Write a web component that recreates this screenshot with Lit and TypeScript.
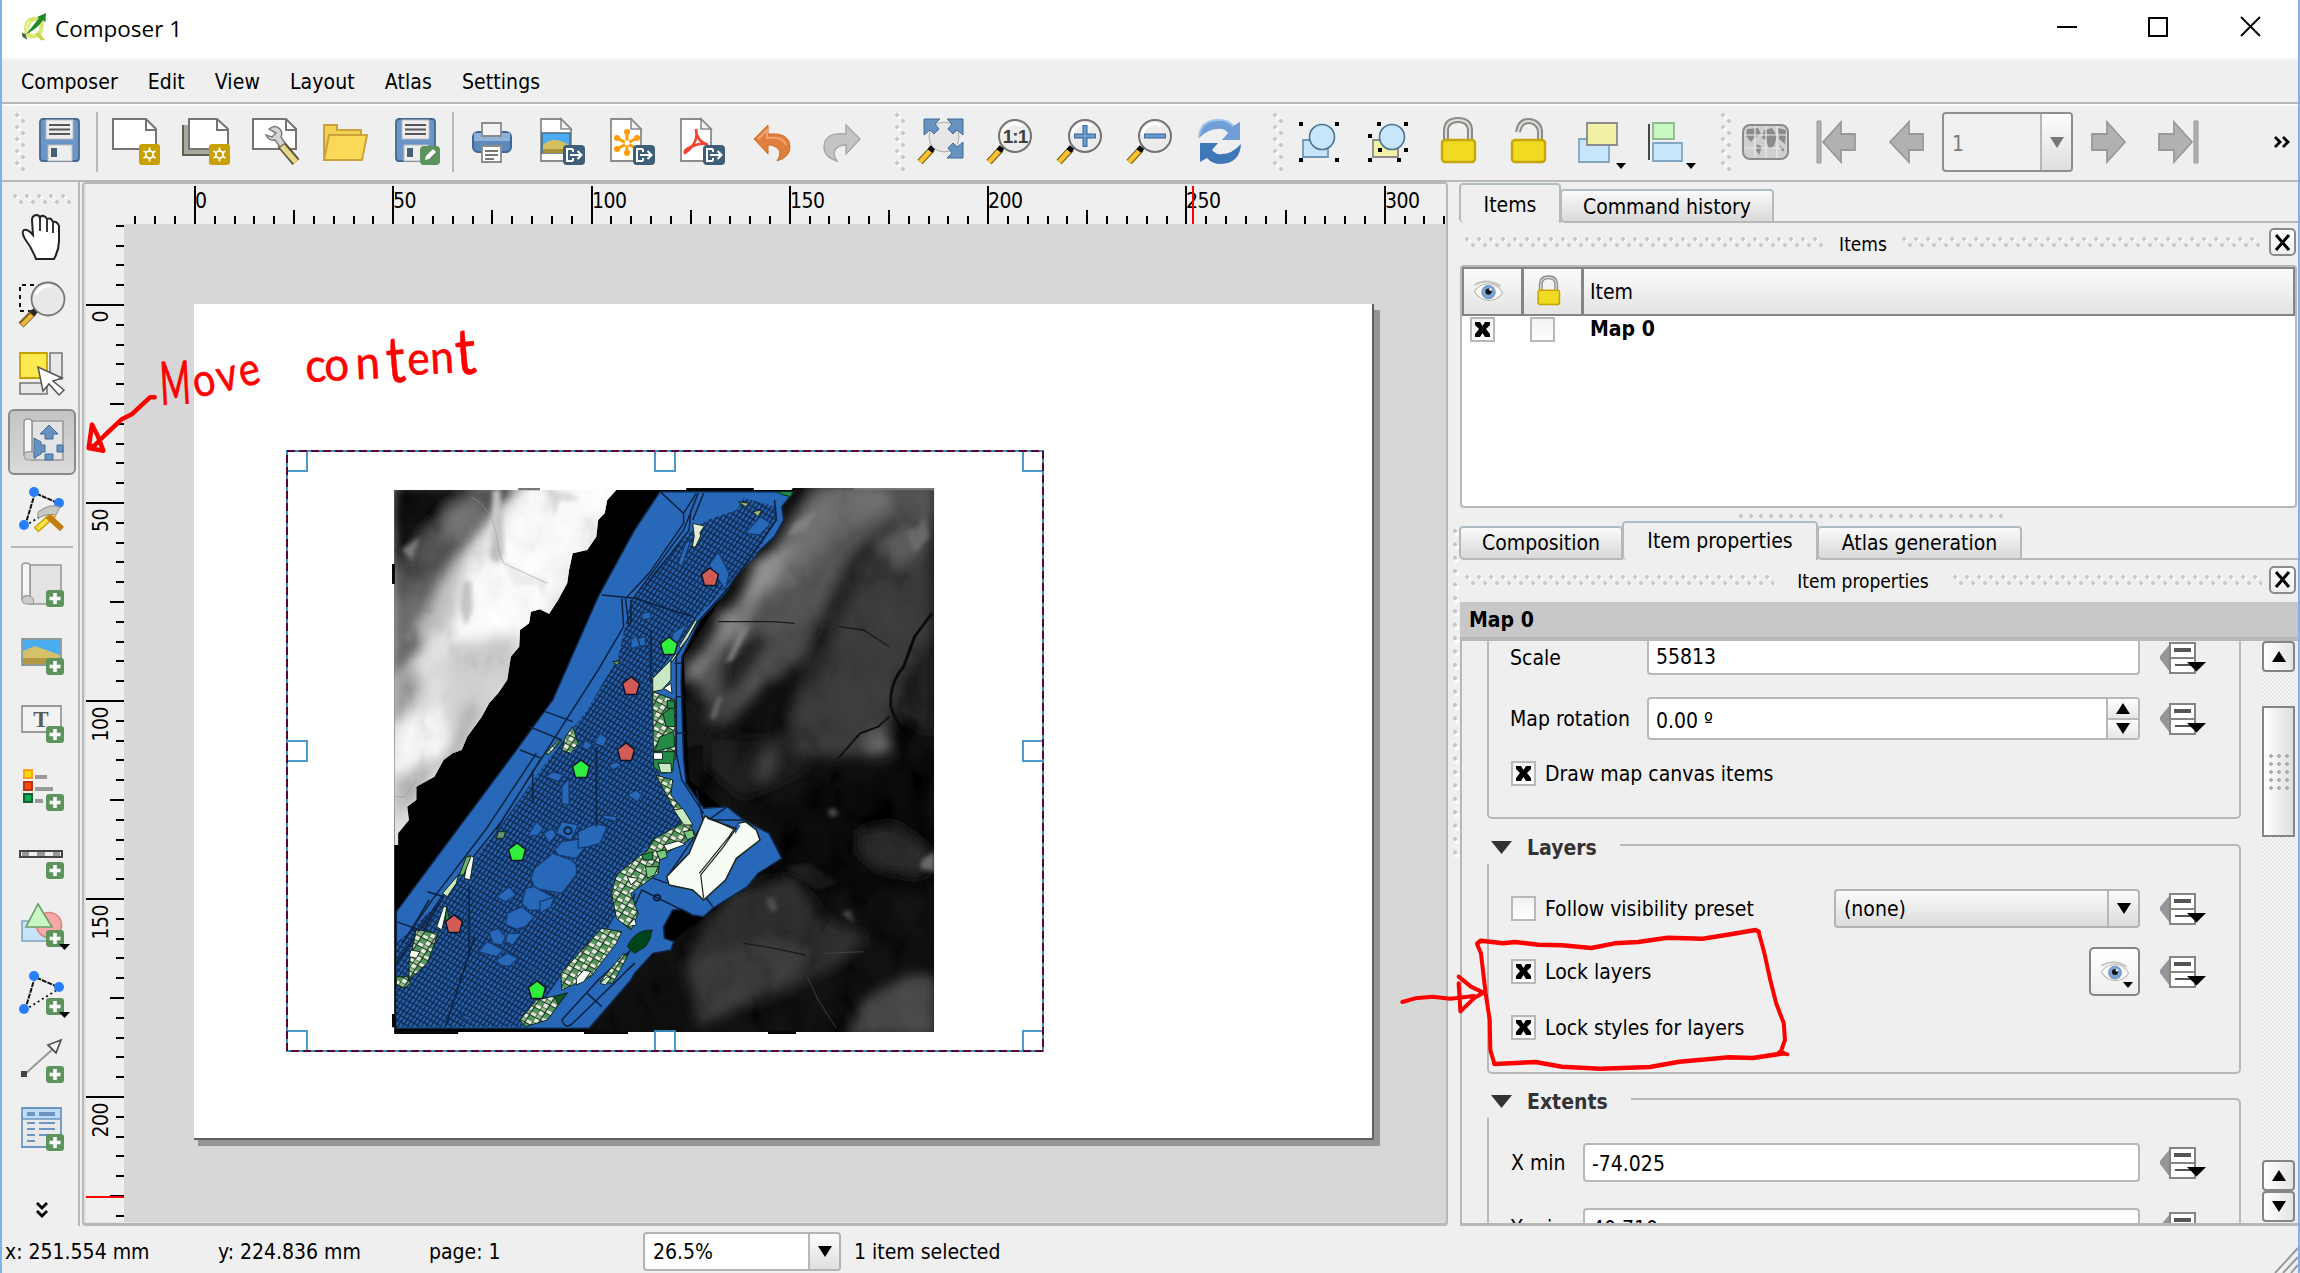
import { LitElement, html, svg, css, nothing } from "lit";
import { customElement, property } from "lit/decorators.js";

/* ---------- shared icon parts ---------- */
const plus = svg`<rect x="28" y="28" width="18" height="17" rx="3" fill="#5d935c"/><path d="M37 31v11M31.500 36.500h11" stroke="#fff" stroke-width="3.600"/>`;
const star = svg`<rect x="27" y="26" width="21" height="21" rx="3" fill="#c8a000"/><path d="M37.500 29.500v14M31.500 33l12 7M43.500 33l-12 7" stroke="#fff" stroke-width="1.800"/><circle cx="37.500" cy="36.500" r="3.600" fill="#c8a000" stroke="#fff" stroke-width="1.800"/>`;
const exportBadge = svg`<rect x="25" y="27" width="22" height="20" rx="4" fill="#3d5f78"/><path d="M35 31h-6v12h6M32 37h11M39.500 33l4 4-4 4M35 31v3M35 43v-3" stroke="#fff" stroke-width="2" fill="none"/>`;
const slimDoc = svg`<path d="M3 1h20l10 10v32H3z" fill="#fff" stroke="#8b8b8b" stroke-width="1.800"/><path d="M23 1v10h10z" fill="#f2f2f2" stroke="#8b8b8b" stroke-width="1.600"/>`;
const floppy = svg`<rect x="4" y="1" width="39" height="42" rx="3" fill="#6b95c5" stroke="#44688f" stroke-width="1.800"/><rect x="10" y="2" width="27" height="19" fill="#eee" stroke="#bbb"/><path d="M13 7h21M13 11.500h21M13 16h21" stroke="#555" stroke-width="2"/><rect x="12" y="27" width="24" height="16" fill="#eee" stroke="#bbb"/><rect x="15" y="30" width="6" height="9" fill="#44607d"/>`;
const lens = svg`<path d="M15 31L3 44" stroke="#7a6420" stroke-width="7"/><path d="M13 33L3 44" stroke="#fcc22c" stroke-width="4.500"/><path d="M16 29l-3 4" stroke="#000" stroke-width="6"/><circle cx="29" cy="18" r="16" fill="#ececec" stroke="#747474" stroke-width="2"/><path d="M16 17a13 13 0 0 1 20-9" fill="none" stroke="#fff" stroke-width="3"/>`;
const nodes = svg`<path d="M7 40L17 7L42 18" fill="none" stroke="#111" stroke-width="2" stroke-dasharray="5 1"/><path d="M7 40L42 18" stroke="#111" stroke-width="1.800" stroke-dasharray="2 3"/><g fill="#277ffb"><circle cx="16" cy="6" r="5"/><circle cx="41" cy="17" r="5"/><circle cx="6" cy="39" r="5"/></g>`;
const caret = svg`<path d="M41 42h11l-5.500 6z" fill="#000"/>`;
const tbCaret = svg`<path d="M42 45h10l-5 6z" fill="#000"/>`;
const mapSheet = svg`<path d="M10 3h31v39H10z" fill="#e3e3e3" stroke="#999" stroke-width="1.600"/><path d="M2 4q0-3 4-3t4 3v30q-8-1-8 4z" fill="#f6f6f6" stroke="#999" stroke-width="1.600"/><path d="M2 38q0 4 4 4h7q2-6-3-8-8-1-8 4z" fill="#ccc" stroke="#999"/>`;
const padlock = svg`<path d="M12 22v-9q0-11 12-11t12 11v9" fill="none" stroke="#8b8b87" stroke-width="6"/><path d="M12 22v-9q0-11 12-11t12 11v9" fill="none" stroke="#deded8" stroke-width="2"/>`;
const lockBody = svg`<rect x="8" y="22" width="33" height="22" rx="3" fill="#f0da22" stroke="#c6a504" stroke-width="2.400"/>`;

const ICONS: Record<string, unknown> = {
  save: floppy,
  newdoc: svg`<path d="M1 1h33l10 10v20H1z" fill="#fff" stroke="#747474" stroke-width="2"/><path d="M34 1v11h10" fill="none" stroke="#747474" stroke-width="2"/>${star}`,
  dup: svg`<path d="M1 7h12v30H1z" fill="#a8a89c"/><path d="M1 7v30h33v-6" fill="#a8a89c" stroke="#5f5f58" stroke-width="2"/><path d="M7 1h28l11 10v20H7z" fill="#fff" stroke="#747474" stroke-width="2"/><path d="M35 1v11h11" fill="none" stroke="#747474" stroke-width="2"/>${star}`,
  wrench: svg`<path d="M1 1h33l10 10v20H1z" fill="#fff" stroke="#747474" stroke-width="2"/><path d="M34 1v11h10" fill="none" stroke="#747474" stroke-width="2"/><path d="M29 26L44 44" stroke="#5b5440" stroke-width="9"/><path d="M30 28L44 44" stroke="#e8d888" stroke-width="5.500"/><path d="M17 11q6-5 11 0q3 4 1 8l4 6-5 4-5-7q-6 1-9-5l6 2 4-4z" fill="#d5d5d5" stroke="#7b7b7b" stroke-width="1.500"/>`,
  folder: svg`<path d="M2 42V7h13v5h24v7" fill="#f2cf4e" stroke="#c9a23a" stroke-width="2"/><path d="M7 17h38l-5 25H2z" fill="#fbd958" stroke="#c9a23a" stroke-width="2"/>`,
  saveas: svg`${floppy}<rect x="28" y="28" width="20" height="19" rx="4" fill="#5d935c"/><path d="M33 42l1-4 7-7 3 3-7 7z" fill="#fff"/>`,
  print: svg`<rect x="5" y="14" width="38" height="20" rx="5" fill="#5f88bd" stroke="#3e6797" stroke-width="2"/><path d="M6 15h36v8H6z" fill="#8fb2da"/><path d="M14 5h19v13H14z" fill="#f2f2f2" stroke="#8b8b8b" stroke-width="1.800"/><path d="M14 28h19v16H14z" fill="#fff" stroke="#8b8b8b" stroke-width="1.800"/><path d="M17 33h13M17 37h13M17 41h9" stroke="#777" stroke-width="1.800"/>`,
  expimg: svg`${slimDoc}<path d="M4 15h28v20H4z" fill="#4bacf0" stroke="#4a6b80" stroke-width="1.500"/><path d="M5 27q10-10 26 0v7H5z" fill="#d1bf60"/><path d="M5 31h26v4H5z" fill="#a8913a"/>${exportBadge}`,
  expsvg: svg`${slimDoc}<path d="M19 14v22M9 20l20 11M29 20L9 31" stroke="#ff9b05" stroke-width="3"/><g fill="#ff9b05"><circle cx="19" cy="14" r="3"/><circle cx="19" cy="35" r="3"/><circle cx="9" cy="20" r="3"/><circle cx="29" cy="20" r="3"/><circle cx="9" cy="31" r="3"/></g><circle cx="19" cy="25" r="2.500" fill="#fff"/>${exportBadge}`,
  exppdf: svg`${slimDoc}<path d="M18 11q3 14-11 24q-2-3 8-7t15-1q-12-4-12-16" fill="none" stroke="#f4442e" stroke-width="2.600"/>${exportBadge}`,
  undo: svg`<path d="M6 21L20 7v9q22-2 22 13q0 10-13 14q7-11-3-15q-2-1-6-1v9z" fill="#e07f3d" stroke="#d56c2c"/><path d="M10 21l9-9v8q16-2 19 7" fill="none" stroke="#f0a878" stroke-width="1.800"/>`,
  redo: svg`<path d="M42 21L28 7v9Q6 14 6 29q0 10 13 14q-7-11 3-15q2-1 6-1v9z" fill="#c4c4c4" stroke="#a8a8a8" stroke-width="1.400"/>`,
  zoomfull: svg`<path d="M16 31L4 44" stroke="#7a6420" stroke-width="7"/><path d="M14 33L4 44" stroke="#fcc22c" stroke-width="4.500"/><path d="M17 29l-3 4" stroke="#000" stroke-width="6"/><circle cx="28" cy="19" r="15" fill="#e6e6e6" stroke="#aaa"/><g fill="#6892c0" stroke="#3f6c9b"><path d="M8 1h16l-5 5 4 5-5 5-4-4-6 5z"/><path d="M47 1H31l5 5-4 5 5 5 4-4 6 5z"/><path d="M47 40H31l5-5-4-5 5-5 4 4 6-5z"/></g>`,
  zoom11: svg`${lens}<text x="29" y="25" text-anchor="middle" font-family="Liberation Sans" font-weight="700" font-size="19" letter-spacing="-1" fill="#3b3f44">1:1</text>`,
  zoomin: svg`${lens}<path d="M29 7v22M18 18h22" stroke="#3c6da0" stroke-width="5"/><path d="M29 8v20M19 18h20" stroke="#6d9cd0" stroke-width="2.600"/>`,
  zoomout: svg`${lens}<path d="M18 18h22" stroke="#3c6da0" stroke-width="5"/><path d="M19 18h20" stroke="#6d9cd0" stroke-width="2.600"/>`,
  refresh: svg`<path d="M3 20Q4 2 23 2q9 0 14 6l7-4v18H26l6-7q-4-5-10-4Q12 11 3 20z" fill="#6f9fd6"/><path d="M3 20Q4 2 23 2q9 0 14 6" fill="none" stroke="#9fc3ea" stroke-width="2"/><path d="M45 26Q44 45 25 46q-9 0-14-6l-7 4V25h18l-6 7q4 5 10 4q10 0 19-10z" fill="#3f78b8"/>`,
  group: svg`<path d="M9 22h25v17H9z" fill="#c7e3f8" stroke="#6f97b5" stroke-width="1.800"/><circle cx="28" cy="19" r="12.500" fill="#c7e6fb" stroke="#4a7594" stroke-width="1.600"/><path d="M5 4h4v4H5zM41 4h4v4h-4zM5 40h4v4H5zM41 40h4v4h-4z" fill="#000"/>`,
  ungroup: svg`<path d="M9 22h25v17H9z" fill="#f2f0a4" stroke="#8b8b8b" stroke-width="1.800"/><circle cx="28" cy="19" r="12.500" fill="#c7e6fb" stroke="#4a7594" stroke-width="1.600"/><path d="M13 4h4v4h-4zM40 4h4v4h-4zM4 16h4v4H4zM14 30h4v4h-4zM40 30h4v4h-4zM4 40h4v4H4zM33 40h4v4h-4z" fill="#000"/>`,
  lock: svg`${padlock}${lockBody}`,
  unlock: svg`<path d="M14 14Q16 2 26 3q11 2 10 14v6" fill="none" stroke="#8b8b87" stroke-width="6"/><path d="M14 14Q16 2 26 3q11 2 10 14v6" fill="none" stroke="#deded8" stroke-width="2"/>${lockBody}`,
  raise: svg`<path d="M5 21h30v23H5z" fill="#c7e6fb" stroke="#7fa6c2" stroke-width="1.800"/><path d="M13 5h30v22H13z" fill="#f2f0a4" stroke="#8b8b8b" stroke-width="1.800"/>${tbCaret}`,
  align: svg`<path d="M5 6v36" stroke="#333" stroke-width="1.800"/><path d="M9 5h21v16H9z" fill="#c9f7c4" stroke="#90bb8c" stroke-width="1.800"/><path d="M9 25h29v18H9z" fill="#c7e6fb" stroke="#7fa6c2" stroke-width="1.800"/>${tbCaret}`,
  atlas: svg`<rect x="1" y="7" width="45" height="34" rx="7" fill="#cfcfcf" stroke="#8b8b8b" stroke-width="2"/><path d="M5 11l11-1 3 6-7 4-3 4-5-6zM15 26l5 3-3 8-3-5zM22 12l8-2 5 8-3 10-5 3-3-9-4-2zM36 10l8 2-1 14-6-5zM37 28l6 2-2 4z" fill="#8b8b8b"/><path d="M13 8v32M24 8v32M35 8v32M2 17h43M2 30h43" stroke="#ececec" stroke-width="1.200"/>`,
  first: svg`<path d="M5 3h4v42H5z" fill="#b1b1b1" stroke="#999"/><path d="M11 24L29 4v12h14v16H29v12z" fill="#b1b1b1" stroke="#999" stroke-width="1.800"/>`,
  prev: svg`<path d="M8 24L27 4v12h14v16H27v12z" fill="#b1b1b1" stroke="#999" stroke-width="1.800"/>`,
  next: svg`<path d="M40 24L22 4v12H7v16h15v12z" fill="#b1b1b1" stroke="#999" stroke-width="1.800"/>`,
  last: svg`<path d="M39 3h4v42h-4z" fill="#b1b1b1" stroke="#999"/><path d="M37 24L19 4v12H4v16h15v12z" fill="#b1b1b1" stroke="#999" stroke-width="1.800"/>`,
  hand: svg`<path d="M18 45Q14 34 7 25Q3 18 6 16q4-1 9 5L14 6q0-4 4-5q4 0 4 4l0-2q4-3 7 2q4-2 6 3q4-1 6 4v15q0 9-5 18z" fill="#fff" stroke="#222" stroke-width="2"/><path d="M22 4v13M29 6v12M35 9v10" stroke="#222" stroke-width="1.800"/>`,
  zoomtool: svg`<path d="M24 3H2v26h13" fill="none" stroke="#111" stroke-width="2" stroke-dasharray="4 4"/><path d="M16 30L3 43" stroke="#7a6420" stroke-width="7"/><path d="M14 33L4 43" stroke="#edb83e" stroke-width="4"/><path d="M18 28l-4 4" stroke="#222" stroke-width="6"/><circle cx="30" cy="17" r="16.500" fill="#e9e9e9" stroke="#777" stroke-width="1.800"/><path d="M18 12q6-10 15-8" stroke="#fff" stroke-width="3" fill="none"/>`,
  select: svg`<path d="M2 3h27v25H2z" fill="#fce94f" stroke="#c4a000" stroke-width="1.800"/><path d="M32 3h12v26H32zM2 33h27v11H2z" fill="#e8e8e8" stroke="#777" stroke-width="1.600"/><path d="M20 17l5 24 6-7 10 11 5-5-11-9 9-3z" fill="#fff" stroke="#555" stroke-width="1.500"/>`,
  move: svg`<g transform="translate(4,0)">${mapSheet}<g fill="#6892c0" stroke="#3f6c9b"><path d="M27 7l9 9h-5v5h-8v-5h-5z"/><path d="M12 20l7 4v3h4v7h-4v2l-7 4z"/><path d="M35 27h6v7h-6zM23 36h8v6h-8z"/></g></g>`,
  editnodes: svg`${nodes}<path d="M18 44L36 28" stroke="#c9a204" stroke-width="7"/><path d="M19 43L36 28" stroke="#fce13f" stroke-width="4"/><path d="M30 30l14 13" stroke="#c17d11" stroke-width="6"/><path d="M20 26q12-9 22-5l-4 8q-8-2-18 3z" fill="#c9c9c4" stroke="#8b8b87"/>`,
  addmap: svg`<g transform="translate(2,0)">${mapSheet}</g>${plus}`,
  addpic: svg`<path d="M4 9h39v26H4z" fill="#4bacf0" stroke="#8f9a9f" stroke-width="1.800"/><path d="M5 21l12-5 25 9v9H5z" fill="#d4c16a"/><path d="M5 28h37v6H5z" fill="#b19a42"/>${plus}`,
  addlabel: svg`<path d="M4 8h39v26H4z" fill="#f3f3f3" stroke="#999" stroke-width="1.800"/><text x="23" y="29" text-anchor="middle" font-family="Liberation Serif" font-weight="700" font-size="23" fill="#5b5b5b">T</text>${plus}`,
  addlegend: svg`<path d="M6 4h8v8H6z" fill="#fddc00" stroke="#ffa11d" stroke-width="2"/><path d="M6 16h8v8H6z" fill="#fb4a04" stroke="#b8321c" stroke-width="2"/><path d="M6 28h8v8H6z" fill="#04b04f" stroke="#145c38" stroke-width="2"/><path d="M17 11h12M17 23h18M17 35h8" stroke="#999" stroke-width="4"/>${plus}`,
  addscale: svg`<rect x="2" y="17" width="42" height="6" fill="#eee" stroke="#444" stroke-width="2"/><path d="M4 20h7M19 20h8M35 20h7" stroke="#999" stroke-width="4"/>${plus}`,
  addshape: svg`<path d="M4 19h28v20H4z" fill="#c7e3f8" stroke="#7fa6c2" stroke-width="1.600"/><circle cx="31" cy="23" r="12.500" fill="#f6a9a6" stroke="#dc8684" stroke-width="1.600"/><path d="M20 2l14 23H8z" fill="#c9f7c4" stroke="#6b9d68" stroke-width="1.600"/>${plus}${caret}`,
  addnodes: svg`${nodes}${plus}${caret}`,
  addarrow: svg`<path d="M7 36L36 10" stroke="#999" stroke-width="2"/><path d="M3 33h6v6H3z" fill="#444"/><path d="M43 2L30 7l8 8z" fill="#f5f5f5" stroke="#555" stroke-width="1.800"/>${plus}`,
  addtable: svg`<path d="M4 2h39v39H4z" fill="#e9e9e9" stroke="#6b95c5" stroke-width="1.800"/><path d="M5 3h37v10H5z" fill="#bcdcf5"/><path d="M4 13h39" stroke="#6b95c5" stroke-width="1.600"/><path d="M9 8h8M21 8h16" stroke="#6b95c5" stroke-width="4"/><path d="M9 17h8M21 17h16M9 23h8M21 23h16M9 29h8M21 29h16M9 35h8" stroke="#6b95c5" stroke-width="2"/>${plus}`,
  logo: svg`<path d="M31 8Q14 4 8 18Q3 36 16 42q18 4 23-16Q41 10 31 8zm-3 6q6 4 4 13-3 10-12 9-7-3-4-13 3-10 12-9z" fill="#dbe76c" fill-rule="evenodd"/><path d="M14 32q-6-8 2-18" fill="none" stroke="#f2f7b5" stroke-width="3"/><path d="M10 36Q20 24 31 10l-2-3L43 1l-1 15-4-3Q28 28 10 36z" fill="#238a2c"/><path d="M25 34l9 12h8L32 33z" fill="#c5d84e"/><path d="M3 34l6 1 3 10-8-5z" fill="#3f6b3c"/>`,
  eye: svg`<path d="M2 24Q10 12 24 12t22 14Q38 38 24 38 10 37 2 24z" fill="#fafaf8" stroke="#b9b9b4" stroke-width="1.800"/><circle cx="24" cy="25" r="10.500" fill="#7ba2cf" stroke="#5a83b4"/><circle cx="24" cy="24" r="4.800" fill="#111"/><circle cx="27" cy="21" r="2" fill="#fff"/><path d="M2 14Q22 2 43 16" fill="none" stroke="#c4c4bf" stroke-width="3"/>`,
};

@customElement("qg-icon")
class QgIcon extends LitElement {
  @property() name = "";
  static styles = css`
    :host { display: block; width: 48px; height: 48px; flex: none; }
    svg { display: block; width: 100%; height: 100%; overflow: visible; }
  `;
  render() {
    return html`<svg viewBox="0 0 48 48">${ICONS[this.name] ?? nothing}</svg>`;
  }
}

/* Data-defined override button */
@customElement("qg-override")
class QgOverride extends LitElement {
  static styles = css`
    :host { display: block; width: 46px; height: 32px; flex: none; }
    svg { display: block; overflow: visible; }
  `;
  render() {
    return html`<svg width="46" height="32" viewBox="0 0 46 32">
      <path d="M10 2v28L0 17v-3z" fill="#96969a" />
      <path d="M10 1h25v15H10zM10 16h25v15H10z" fill="#fff" stroke="#858580" stroke-width="2" />
      <path d="M14 8h17" stroke="#555" stroke-width="4" /><path d="M15 23h16" stroke="#555" stroke-width="2" />
      <path d="M27 20h19l-9.500 9.500z" fill="#000" />
    </svg>`;
  }
}

/* Map canvas: rulers, paper page and the selected map item */
@customElement("qg-canvas")
class QgCanvas extends LitElement {
  static styles = css`
    :host { display: block; width: 1360px; height: 1038px; }
    svg { display: block; }
    .num { font: 21px "DejaVu Sans Condensed", "DejaVu Sans", sans-serif; font-stretch: condensed; fill: #000; letter-spacing: -.5px; }
    .thin, .lines * { vector-effect: non-scaling-stroke; }
  `;

  private ticks() {
    const out: unknown[] = [];
    for (let i = -3; i <= 63; i++) {
      const x = Math.round(193.900 + i * 19.830);
      if (x > 1444) break;
      const y = i % 10 === 0 ? 186 : i % 5 === 0 ? 210 : 216;
      out.push(svg`<rect x=${x} y=${y} width="2" height=${224 - y}/>`);
      if (i % 10 === 0) out.push(svg`<text class="num" x=${x + 1} y="208">${i * 5}</text>`);
    }
    for (let i = -4; i <= 46; i++) {
      const y = Math.round(304 + i * 19.800);
      const x = i % 10 === 0 ? 86 : i % 5 === 0 ? 110 : 116;
      out.push(svg`<rect x=${x} y=${y} width=${124 - x} height="2"/>`);
      if (i % 10 === 0) {
        out.push(svg`<text class="num" text-anchor="end" transform=${`translate(108 ${y + 7}) rotate(-90)`}>${i * 5}</text>`);
      }
    }
    return out;
  }

  private marker(x: number, y: number, c: string) {
    return svg`<path transform=${`translate(${x} ${y})`} d="M0-9L8.500-2.600 5.500 8.500H-5.500L-8.500-2.600z" fill=${c} stroke="#06122a" stroke-width="1.400"/>`;
  }

  private terrain() {
    return svg`
      <rect x="39" y="60" width="1479" height="1626" fill="#000"/>
      <g clip-path="url(#west)">
        <rect x="39" y="60" width="640" height="1100" fill="#e2e2e2"/>
        <g filter="url(#soft)">
          <path d="M400 40H680L520 330 400 520 300 560 190 520 240 300 330 180z" fill="#fff"/>
          <path d="M30 40H400L330 110 250 210 200 330 120 520 30 640z" fill="#4b4b4b"/>
          <path d="M30 40H270L130 180 30 330z" fill="#000"/>
          <path d="M190 110l80-30 10 60-60 70-60 0z" fill="#6e6e6e"/>
          <path d="M30 430l60-90 80-30 20 80-70 110-90 90z" fill="#626262"/>
          <path d="M100 480l100-200 50-60-50 220-80 80z" fill="#c4c4c4"/>
          <path d="M30 640l60-60 30 70-90 130z" fill="#a2a2a2"/>
          <path d="M200 520l180-30-40 180-120 180-60-120z" fill="#d2d2d2"/>
          <path d="M60 760l110-60 20 120-60 80-90 30z" fill="#fcfcfc"/>
          <path d="M160 900l60-120 30-90 20 20-60 160z" fill="#9c9c9c"/>
          <path d="M40 920l120-60-60 130-60 60z" fill="#b8b8b8"/>
        </g>
        <g filter="url(#softer)">
          <path d="M225 340l25-10 5 90-20 50-15-60zM310 60l22 0 10 190-14 30-25-10z" fill="#c6c6c6"/>
          <path d="M460 60l60 10 30 20-60 5-10 40-10-50z" fill="#dedede"/>
          <path d="M330 260l70 50 60 20-10 60-20-50-60 10z" fill="#efefef"/>
          <path d="M60 500l40-30 -10 60zM60 240l50-40-20 70z" fill="#777"/>
        </g>
        <path d="M250 80q70 40 75 160l15 40 120 60M39 980l30 0 30-50" fill="none" stroke="#9b9b9b" stroke-width="1" class="thin" opacity=".6"/>
        <rect x="39" y="60" width="640" height="1100" filter="url(#noise)" opacity=".08"/>
      </g>
      <g clip-path="url(#east)">
        <rect x="540" y="50" width="990" height="1640" fill="#070707"/>
        <g filter="url(#soft)">
          <path d="M1190 40H1530V200L1400 180 1300 260 1230 400 1160 560 1060 640 940 780 870 640 870 560 1040 300z" fill="#505050"/>
          <path d="M1170 110L1260 40 1400 60 1400 110 1240 210 1160 330 1000 410z" fill="#6a6a6a"/>
          <path d="M1030 270l110-50-60 120-90 60z" fill="#909090"/>
          <path d="M930 430l120-70-60 130-80 50z" fill="#848484"/>
          <path d="M850 570l100-60-70 120-50 10z" fill="#787878"/>
          <path d="M1100 470l90-20-90 180-60 0z" fill="#454545"/>
          <path d="M1240 400L1370 200l150-60v600l-100-60-40 180H1090l60-200z" fill="#363636"/>
          <path d="M1150 560L1290 250l130-110 20 10-120 150-80 230-60 140z" fill="#1a1a1a"/>
          <path d="M1360 220l100-60 40 60-70 80z" fill="#565656"/>
          <path d="M940 560l90-70 50 10-110 190-50 60z" fill="#1c1c1c"/>
          <path d="M900 750l50-90 60 0-60 120z" fill="#3c3c3c"/>
          <path d="M840 660l80 30-40 130-50 30z" fill="#070707"/>
          <path d="M1330 800l60-30 20 70-60 20z" fill="#6a6a6a"/>
          <path d="M1420 620l100-120v300l-90-60z" fill="#1a1a1a"/>
          <path d="M900 800h220l60 100-180 90-100-90z" fill="#161616"/>
          <path d="M1040 890l50-90 0 90-50 50z" fill="#3e3e3e"/>
          <path d="M1100 1010l420-160v420l-420 0z" fill="#010101"/>
          <path d="M1320 1080l90-20 90 70 20 40-30 50-110-20-60-50z" fill="#242424"/>
          <path d="M960 1270l170-50 90 120 120 60-80 90-240 120-180-150 90-150z" fill="#262626"/>
          <path d="M840 1480l240-80 120 30-80 110-240 130z" fill="#353535"/>
          <path d="M1330 1590l130-80 70 10v180h-250z" fill="#424242"/>
        </g>
        <g filter="url(#softer)">
          <path d="M1490 1170l35-25v60l-40-10z" fill="#666"/>
          <path d="M1060 1290l20-10 15 40-20 5zM1270 1330l20-10 15 40zM1230 1020l20-5 10 20-20 5z" fill="#4a4a4a"/>
          <path d="M910 740l20-60 10 0-20 70z" fill="#707070"/>
          <path d="M1140 160l60-40-30 60-50 20zM990 480l30-20-50 110-20 10z" fill="#7f7f7f"/>
          <path d="M1110 1190l70-10 80 60-60 20zM960 1200l60 0 60 20-90 40z" fill="#161616"/>
          <path d="M1450 190l50-50 10 60-40 50z" fill="#666"/>
        </g>
        <path d="M1518 430L1470 500 1440 590Q1400 640 1405 710q20 80 115 145" fill="none" stroke="#040404" stroke-width="3" class="thin"/>
        <path d="M1400 740L1370 770 1320 790 1260 865" fill="none" stroke="#0a0a0a" stroke-width="2" class="thin"/>
        <path d="M930 455h150l60 5M1260 470l70 10 70 50M1000 1420l60 10 110 25M840 690l70 85" fill="none" stroke="#141414" stroke-width="1.300" class="thin"/>
        <path d="M1175 1520l30 70 50 85M1220 1450l110-5" fill="none" stroke="#4a4a4a" stroke-width="1" class="thin" opacity=".7"/>
        <rect x="540" y="50" width="990" height="1640" filter="url(#noise)" opacity=".05"/>
      </g>`;
  }

  private city() {
    return svg`
      <path d="M770 65H1138L1105 110 1110 150 1085 200 1045 240 985 310 950 370 880 450 830 560 828 640 835 870 842 940 890 1015 955 1010 1000 1050 1070 1090 1105 1165 1040 1210 1010 1250 915 1315 890 1340 860 1335 830 1318 805 1320 780 1370 782 1405 808 1415 800 1440 750 1450 700 1510 690 1530 575 1675H45V1325L150 1170 355 870 475 690 600 380 700 180z" fill="#2868b8" stroke="#10284a" stroke-width="1.500" class="thin"/>
      <path d="M850 190L900 150 980 120 1000 85 1090 110 1090 150 1030 260 870 445 800 560 750 630V870L800 980 830 1060 735 1130 640 1240 650 1330 620 1390 510 1500 400 1670H45V1420L180 1280 250 1180 330 1070 455 880 570 720 655 560 680 440 690 390 790 260z" fill="url(#streets)"/>
      <g fill="#2868b8" stroke="#15386a" stroke-width="1.200" class="lines">
        <path d="M425 1195l50-45 50 20 15 15v30l-40 55-25-5-50-10-10-30z"/><path d="M400 1255l25-5 40 25 20 10-45 35-30 0-20-20z"/><path d="M350 1330l40-20 35 30-25 30-25 8-30-15z"/><path d="M480 1140l20-25 60-10 5 25-25 35-50-10z"/><path d="M545 1085l50-25 30 10-20 50-30 10-30 5z"/><path d="M320 1280l35-30 20 25-30 20zM300 1385l25-10 20 25-10 25-25-5zM270 1445l25-30 45 25-20 20zM350 1390l40 0-25 35-20-10zM320 1470l30-20 30 15-25 25-25-5zM440 1295l40-15-10 30-30 20z"/><path d="M490 1075l10-20 45 10-20 45-40-20zM405 1100l25-45 20 20-15 20zM450 1090l25-15 10 20-20 25z"/><path d="M820 280l20-60 15-10-25 80zM905 285l25-40 30 65-10 50zM1005 190l40-50 30 20-30 35z"/><path d="M680 975l25-15 15 15-12 20zM500 1000l0-50 20-25 0 80zM455 920l20-15 30 10-15 20zM590 820l15-30 20 15-10 25zM555 830l10-20 20 15-15 15zM630 885l20-10 15 10-25 15zM720 430l25-5-2 20-22 5zM690 510l15-15 10 35-25 5zM710 505l20-5 0 25-15 5zM610 1035l40 5 0 15-35-10zM805 490l40-30-25 55-20 5zM215 1630l40 15-15 5z"/>
      </g>
      <g fill="none" stroke="#0d2140" stroke-width="1.500" class="lines">
        <path d="M770 65L835 130V160L740 310 680 380M875 70L835 180 700 380M855 120L850 180 730 350M610 375L700 385 860 440M455 725L530 755M410 770L500 810M385 840L445 865M835 130L870 70M890 70L860 150"/>
        <path d="M665 385L670 470 600 600 500 770 330 1060 170 1280 45 1480M675 385L685 470M690 390L690 460M430 850L290 1080 150 1280 60 1420M440 870L320 1080"/>
        <path d="M1085 90L1090 150 960 350 870 460 815 560 815 850 830 930 890 1030M870 960L890 1060 790 1220M700 1270L690 1330 720 1260 830 1320M740 1220L790 1240M860 1230L915 1310M890 1060L955 1010M1000 1050L890 1050M830 580h-20M835 680h-20M840 790h-25M610 1610L570 1570M680 1500l20-20"/>
        <path d="M595 830V1070M745 480V640M750 1380L600 1530 500 1650q10 30 30 10L700 1480M650 1510L700 1420M245 1250V1460M180 1670L260 1400M420 900V1000M45 1355L110 1380M130 1265l45 15-60 110-30-10 50-90"/>
      </g>
      <circle cx="517" cy="1082" r="10" fill="none" stroke="#0d2140" stroke-width="2" class="thin"/><circle cx="762" cy="1283" r="9" fill="none" stroke="#0d2140" stroke-width="2" class="thin"/>
      <g stroke="#10281d" stroke-width="1" class="lines">
        <path d="M750 625L800 570V630L775 660 750 665z" fill="#c7e8c2"/><path d="M780 655l20-15 3 30z" fill="#fff"/>
        <path d="M750 665L812 690 812 870H752z" fill="url(#parcels)"/>
        <path d="M778 730l30-20 4 60-25 0zM770 800l38-15 2 45-55 15z" fill="#238b45"/><path d="M790 690l20 5 0 20-20 0z" fill="#238b45"/>
        <path d="M752 845h58l-5 60-30 5-23-20z" fill="#238b45"/><path d="M752 848l25 0 0 20-25 0z" fill="#fff"/><path d="M765 880l35 0 2 28-30 0z" fill="#c7e8c2"/>
        <path d="M758 915L805 930 800 975 830 1015 865 1090 850 1110 770 1160 765 1210 690 1270 710 1330 690 1380 650 1345 637 1270 650 1215 735 1140 750 1110 830 1060 800 1000z" fill="url(#parcels)"/>
        <path d="M808 1020l25-5 28 50-25 0z" fill="#c7e8c2"/><path d="M835 1085l25-5 5 20-20 10zM760 1145l25-5 5 20-20 10zM730 1190l35 0-10 25-20 10z" fill="#7bc87c"/><path d="M720 1155l30-10 0 25-25 0z" fill="#238b45"/>
        <path d="M780 1125l40-12 20 10-50 20zM680 1220l30 5-20 20zM680 1370l20-25 5 20z" fill="#f7fcf5"/>
        <path d="M610 1375L665 1385 650 1420 580 1520 500 1560 497 1510z" fill="url(#parcels)"/>
        <path d="M540 1525l20-25 20 5-20 30-20 10z" fill="#f7fcf5"/>
        <path d="M430 1590L515 1570 460 1650 400 1670 385 1650z" fill="url(#parcels)"/>
        <path d="M480 1580l35-12-25 35z" fill="#0d5a2a"/>
        <path d="M680 1430Q700 1380 745 1380 750 1400 730 1430L700 1450z" fill="#00441b"/>
        <path d="M605 1535L670 1450 680 1460 640 1540z" fill="url(#parcels)"/><path d="M605 1540l20-20 10 5-15 20z" fill="#c7e8c2"/>
        <path d="M245 1155L258 1162 248 1230 232 1225 236 1200z" fill="#f7fcf5"/><path d="M238 1160l12 0-20 55-12 0z" fill="#6db36c"/><path d="M172 1270L215 1215 210 1240 185 1280z" fill="#c7e8c2"/>
        <path d="M175 1310l10 0-15 70-14-10z" fill="#f7fcf5"/><path d="M183 1310l8 35-12 10z" fill="#238b45"/><path d="M100 1380l60 10-30 90-50 50 0-50z" fill="url(#parcels)"/>
        <path d="M45 1520l30 0 10 20-20 15-20-10z" fill="url(#parcels)"/><path d="M85 1440l25 5-10 20-20-5z" fill="#f7fcf5"/>
        <path d="M510 800l20-30 15 50-20 30-25-10zM455 850l38-42 5 6-35 40z" fill="url(#parcels)"/>
        <path d="M860 160l32 8-12 20 2 10-15 34-8-3 5-30z" fill="#e3e8d4"/><path d="M985 95l30 5-10 10zM1025 125l25-5-10 20z" fill="#a5b58a"/>
        <path d="M1090 65h45l-5 15-20-5z" fill="#238b45"/>
        <path d="M822 530l45-80 5 4-25 50-20 30zM800 570l12-20 4 5-14 22z" fill="#d6ddc4"/>
        <path d="M325 1085l20 0-5 20-20 0zM640 575l20-3-8 14z" fill="#6f936a"/>
      </g>
      <path d="M893 1038L975 1078 985 1060 1005 1055 1035 1080 1045 1110 980 1165 950 1230 890 1290 860 1260 795 1245 788 1220 850 1150z" fill="#f7fcf5" stroke="#1b2620" stroke-width="1.500" class="thin"/>
      <path d="M975 1078l10-20 6 10-14 25z" fill="#2868b8"/>
      <path d="M900 1045L980 1075 945 1130 882 1215 890 1285M975 1075L960 1100 878 1210" fill="none" stroke="#222" stroke-width="1.200" class="thin"/>`;
  }

  render() {
    const red = "#d25b56", green = "#2fee3c";
    const handles = [[287, 451], [655, 451], [1023, 451], [287, 741], [1023, 741], [287, 1031], [655, 1031], [1023, 1031]];
    return html`<svg width="1360" height="1038" viewBox="86 184 1360 1038">
      <defs>
        <clipPath id="west"><path d="M39 60H650L625 90 618 130 600 150 595 200 570 240 530 250 520 300 515 340 490 390 465 432 440 418 415 425 410 460 385 480 383 530 360 560 350 630 325 670 300 700 280 740 240 800 225 840 200 850 175 870 150 920 100 950 100 990 75 1010 80 1050 50 1090 50 1125 39 1125z"/></clipPath>
        <clipPath id="east"><path d="M1135 54H1524V1686H560L700 1500 1105 1165 850 930 835 560z"/></clipPath>
        <filter id="soft" x="-10%" y="-10%" width="120%" height="120%"><feGaussianBlur stdDeviation="17"/></filter>
        <filter id="softer" x="-10%" y="-10%" width="120%" height="120%"><feGaussianBlur stdDeviation="6"/></filter>
        <filter id="noise" x="0" y="0" width="100%" height="100%"><feTurbulence type="fractalNoise" baseFrequency=".012 .008" numOctaves="4" seed="7"/><feColorMatrix values="1.800 0 0 0 -.5  1.800 0 0 0 -.5  1.800 0 0 0 -.5  0 0 0 0 1"/></filter>
        <pattern id="streets" width="16" height="11" patternUnits="userSpaceOnUse" patternTransform="rotate(-58)"><rect width="16" height="11" fill="#2763b0"/><path d="M0 2H16M2 0V11" stroke="#0e274b" stroke-width="3.800"/></pattern>
        <pattern id="parcels" width="34" height="26" patternUnits="userSpaceOnUse" patternTransform="rotate(30)"><rect width="34" height="26" fill="#e3ebda"/><path d="M0 0h17v13H0z" fill="#8fc089"/><path d="M17 13h17v13H17z" fill="#4f9c5c"/><path d="M0 0H34M0 13H34M0 0V26M17 0V26" stroke="#1c3322" stroke-width="3.500"/></pattern>
      </defs>
      <rect x="86" y="184" width="1360" height="1038" fill="#efefef"/>
      <rect x="124" y="224" width="1322" height="998" fill="#d7d7d7"/>
      ${this.ticks()}
      <rect x="1192" y="186" width="2" height="38" fill="#f00"/><rect x="86" y="1196" width="38" height="2" fill="#f00"/>
      <rect x="198" y="310" width="1182" height="836" fill="#959595"/>
      <rect x="194" y="304" width="1180" height="836" fill="#5f5f5f"/>
      <rect x="194" y="304" width="1178" height="834" fill="#fff"/>
      <g transform="translate(380 470) scale(.36364 .33333)">
        ${this.terrain()}${this.city()}
        <path d="M380 54h60v7H380zM1304 54h220v7h-220z" fill="#777"/><path d="M842 54h186v7H842zM33 282h8v60h-8zM33 1632h8v40h-8zM39 1684h176v8H39zM561 1684h121v8H561zM1067 1684h77v8h-77z" fill="#080808"/>
      </g>
      ${this.marker(710, 577, red)}${this.marker(669, 646, green)}${this.marker(631, 686, red)}${this.marker(626, 752, red)}
      ${this.marker(581, 769, green)}${this.marker(517, 852, green)}${this.marker(454, 924, red)}${this.marker(537, 990, green)}
      <rect x="287" y="451" width="756" height="600" fill="none" stroke="#3d90c6" stroke-width="2"/>
      ${handles.map(([x, y]) => svg`<rect x=${x} y=${y} width="20" height="20" fill="none" stroke="#3d90c6" stroke-width="1.800"/>`)}
      <rect x="287" y="451" width="756" height="600" fill="none" stroke="#5c0632" stroke-width="2" stroke-dasharray="8 4"/>
    </svg>`;
  }
}

@customElement("app-root")
class AppRoot extends LitElement {
  static styles = css`
    :host {
      display: block; position: relative; box-sizing: border-box; width: 2300px; height: 1273px; overflow: hidden;
      background: #efefef; color: #000; border-left: 2px solid #7fb2ee; border-right: 2px solid #7fb2ee;
      font: 21px/24px "DejaVu Sans Condensed", "DejaVu Sans", sans-serif; font-stretch: condensed; white-space: nowrap;
    }
    * { box-sizing: border-box; }
    svg { display: block; flex: none; }
    .title { height: 60px; background: #fff; border-bottom: 2px solid #f7f7f7; display: flex; align-items: center; padding: 0 20px 4px 18px; font: 22.5px/30px "Open Sans", sans-serif; }
    .title qg-icon { width: 29px; height: 32px; margin-right: 6px; }
    .title .name { flex: 1; padding-top: 3px; }
    .menu { height: 44px; display: flex; gap: 30px; padding: 10px 0 0 19px; border-bottom: 2px solid #b8b8b8; letter-spacing: .1px; }
    .tools { height: 78px; display: flex; align-items: center; padding: 0 0 2px 12px; border-top: 2px solid #fbfbfb; border-bottom: 2px solid #b8b8b8; }
    .set { display: flex; gap: 22px; }
    .grip { width: 12px; height: 60px; flex: none; background: radial-gradient(circle at 3px 3px, #c9c9c9 1.600px, transparent 2px) 0 0/12px 12px, radial-gradient(circle at 9px 9px, #c9c9c9 1.600px, transparent 2px) 0 0/12px 12px, radial-gradient(circle at 5px 5px, #fff 1.800px, transparent 2px) 0 0/12px 12px; }
    .sep { width: 2px; height: 60px; background: #b8b8b8; flex: none; }
    .combo { display: flex; border: 2px solid #b3b3b3; border-radius: 4px; background: #fff; }
    .combo .val { flex: 1; padding-left: 8px; }
    .combo .drop { width: 31px; border-left: 2px solid #b8b8b8; background: linear-gradient(#fdfdfd, #dedede); display: flex; align-items: center; justify-content: center; border-radius: 0 3px 3px 0; }
    .combo.page { width: 131px; height: 60px; margin: 0 12px 0 12px; border-color: #8f8f8f; background: #f0f0f0; color: #7a7a7a; line-height: 60px; }
    .combo.zoom { width: 198px; height: 39px; margin: 0 13px 0 0; line-height: 37px; }
    .combo.preset { width: 306px; height: 39px; background: linear-gradient(#fbfbfb, #dcdcdc); line-height: 36px; margin-left: auto; }
    .combo.preset .drop { background: none; }
    .main { display: flex; height: 1044px; }
    .side { width: 78px; border-right: 2px solid #b8b8b8; display: flex; flex-direction: column; align-items: center; padding: 11px 0 0 4px; }
    .cell { width: 68px; height: 68px; display: flex; align-items: center; justify-content: center; flex: none; border-radius: 6px; }
    .cell.on { border: 2px solid #8b8b8b; background: linear-gradient(#c4c4c4, #dadada); height: 66px; margin: 1px 0; }
    .hsep { width: 62px; height: 2px; background: #b8b8b8; margin: 2px 0 4px; flex: none; }
    .frame { width: 1366px; height: 1044px; margin-left: 2px; border: 2px solid #b8b8b8; border-bottom-width: 3px; border-radius: 4px; overflow: hidden; background: #e2e2e2; padding-left: 2px; flex: none; }
    .rail { width: 12px; display: flex; justify-content: flex-end; padding-top: 346px; flex: none; }
    .rail i { width: 8px; height: 336px; background: radial-gradient(circle at 3px 3px, #c6c6c6 1.800px, transparent 2.200px) 0 0/8px 13.400px, radial-gradient(circle at 5px 6px, #fff 1.800px, transparent 2.200px) 0 0/8px 13.400px; }
    .dock { flex: 1; min-width: 0; display: flex; flex-direction: column; }
    .tabs { display: flex; align-items: flex-end; height: 41px; flex: none; }
    .tabs.low { height: 40px; }
    .tab { height: 34px; border: 2px solid #b8b8b8; border-radius: 4px 4px 0 5px; background: linear-gradient(#fafafa, #d9d9d9); border-top-color: #b0bcc4; line-height: 32px; text-align: center; margin-left: -1px; }
    .tab.on { height: 40px; background: #efefef; border-bottom: none; line-height: 40px; }
    .tabs.low .tab { line-height: 31px; }
    .tabs.low .tab.on { height: 39px; line-height: 37px; }
    .fill { flex: 1; border-bottom: 2px solid #b8b8b8; align-self: stretch; }
    .dtitle { display: flex; align-items: center; font-size: 19px; height: 42px; padding: 0 0 4px 4px; flex: none; }
    .dtitle.low { height: 42px; padding-bottom: 3px; }
    .hgrip { height: 12px; flex: 1; background: radial-gradient(circle at 3px 3px, #c9c9c9 1.700px, transparent 2.100px) 0 0/12px 12px, radial-gradient(circle at 9px 9px, #c9c9c9 1.700px, transparent 2.100px) 0 0/12px 12px, radial-gradient(circle at 5px 4px, #fff 1.400px, transparent 1.800px) 0 0/12px 12px; }
    .side .hgrip { width: 60px; margin-bottom: -1px; flex: none; }
    .dtitle .cap { padding: 3px 14px 0; }
    .dtitle .cap.w { padding: 2px 23px 0; }
    .close { width: 27px; height: 28px; margin: 0 2px 0 7px; border: 2px solid #8b8b8b; border-radius: 5px; background: linear-gradient(#fff, #eee); display: flex; align-items: center; justify-content: center; }
    .tree { height: 243px; border: 2px solid #b8b8b8; border-radius: 4px; background: #fff; margin-right: 1px; flex: none; }
    .thead { display: flex; height: 49px; border: 2px solid #858585; background: linear-gradient(#fbfbfb, #e4e4e4); }
    .thead > div { width: 60px; border-right: 3px solid #858585; display: flex; align-items: center; justify-content: center; padding-right: 8px; }
    .thead > .nm { flex: 1; border: none; justify-content: flex-start; padding-left: 6px; }
    .thead qg-icon { width: 31px; height: 31px; }
    .trow { display: flex; align-items: center; height: 26px; padding-left: 8px; font-weight: 700; gap: 35px; }
    .box { width: 25px; height: 25px; border: 2px solid #b8b8b8; background: linear-gradient(#f2f2f2, #fff); flex: none; display: flex; align-items: center; justify-content: center; }
    .split { height: 12px; display: flex; justify-content: center; align-items: center; flex: none; }
    .split i { width: 266px; height: 6px; margin-right: 16px; margin-top: 4px; background: radial-gradient(circle at 3px 3px, #c6c6c6 1.800px, transparent 2.200px) 0 0/10px 6px; }
    .head { height: 35px; background: #c8c8c8; font-weight: 700; padding: 6px 0 0 9px; line-height: 24px; flex: none; }
    .scroll { display: flex; height: 589px; border: 2px solid #b8b8b8; border-top-width: 4px; border-bottom-width: 3px; border-right: none; overflow: hidden; justify-content: space-between; flex: none; }
    .form { width: 780px; padding-left: 25px; height: 582px; overflow: hidden; }
    .grp { width: 754px; border: 2px solid #b8b8b8; border-radius: 5px; padding-left: 22px; }
    .g1 { border-top: none; height: 178px; border-radius: 0 0 5px 5px; }
    .g2 { height: 230px; margin-top: 25px; }
    .g3 { height: 200px; margin-top: 24px; }
    .gt { height: 34px; margin: -16px 0 25px -26px; padding: 1px 0 0 6px; background: #efefef; display: flex; align-items: center; gap: 15px; font-weight: 700; color: #333; }
    .g2 .gt { width: 135px; } .g3 .gt { width: 146px; }
    .row { display: flex; align-items: center; width: 695px; }
    .row qg-override { margin-left: 20px; }
    .lab { width: 136px; } .g3 .lab { width: 72px; }
    .g1 .lab { margin-left: -1px; width: 137px; }
    .inp { flex: 1; height: 39px; border: 2px solid #b8b8b8; border-radius: 4px; background: #fff; line-height: 38px; padding-left: 7px; display: flex; }
    .inp.cut { height: 34px; border-top: none; border-radius: 0 0 4px 4px; line-height: 32px; }
    .inp.spin { height: 43px; line-height: 44px; }
    .spins { margin-left: auto; width: 32px; border-left: 2px solid #b8b8b8; display: flex; flex-direction: column; }
    .spins div { flex: 1; display: flex; align-items: center; justify-content: center; background: linear-gradient(#fff, #e6e6e6); }
    .spins div + div { border-top: 2px solid #b8b8b8; }
    .txt { margin-left: 9px; }
    .r2 { margin-top: 22px; } .r3 { margin-top: 21px; }
    .rl { height: 49px; margin-top: 19px; } .rs { margin-top: 19px; }
    .ry { margin-top: 26px; }
    .eyebtn { width: 51px; height: 49px; border: 2px solid #858585; border-radius: 5px; background: linear-gradient(#fff, #eee); margin-left: auto; display: flex; align-items: center; justify-content: center; }
    .eyebtn qg-icon { width: 30px; height: 30px; }
    .eyebtn svg { margin: 26px -4px 0 -7px; z-index: 1; }
    .bar { width: 33px; height: 581px; display: flex; flex-direction: column; margin-right: 3px; background: repeating-conic-gradient(#e4e4e4 0 25%, #f7f7f7 0 50%) 0 0/4px 4px; }
    .btn { height: 31px; border: 2px solid #858585; border-radius: 4px; background: linear-gradient(90deg, #fff, #e4e4e4); display: flex; align-items: center; justify-content: center; flex: none; }
    .thumb { height: 131px; margin: 34px 0 auto; border: 2px solid #858585; background: linear-gradient(90deg, #fff, #dedede); display: flex; align-items: center; justify-content: center; }
    .thumb i { width: 22px; height: 38px; background: radial-gradient(circle at 3px 3px, #b0b0b0 1.600px, transparent 2px) 0 0/8px 8px; }
    .status { display: flex; align-items: center; height: 47px; padding: 4px 0 0 3px; }
    .sx { width: 213px; } .sy { width: 211px; } .sp { width: 214px; } .zoom { flex: none; }
    .over { position: absolute; left: -2px; top: 0; width: 2300px; height: 1273px; pointer-events: none; }
    .ink { fill: none; stroke: #f00; stroke-linecap: round; stroke-linejoin: round; vector-effect: non-scaling-stroke; }
    .note { fill: #f00; stroke: #f00; stroke-width: .6; font-family: Lato, sans-serif; font-stretch: normal; }
  `;

  private tri(up = false, w = 14, c = "#000") {
    return html`<svg width=${w} height=${w > 14 ? 13 : 11} viewBox="0 0 14 11" preserveAspectRatio="none"><path d=${up ? "M7 0L14 11H0z" : "M0 0H14L7 11z"} fill=${c} /></svg>`;
  }
  private set(names: string[]) {
    return html`<div class="set">${names.map((n) => html`<qg-icon name=${n}></qg-icon>`)}</div>`;
  }
  private check(on: boolean) {
    return html`<div class="box">${on ? html`<svg width="19" height="19" viewBox="0 0 19 19"><path d="M2 2h5l2.500 4 2.500-4h5v3l-4 4 4 5v3h-5l-2.500-4-2.500 4H2v-3l4-5-4-4z" fill="#000" /></svg>` : nothing}</div>`;
  }
  private closeBtn() {
    return html`<div class="close"><svg width="17" height="17" viewBox="0 0 17 17"><path d="M2 1l13 15M15 1L2 16" stroke="#000" stroke-width="3" /></svg></div>`;
  }
  private gap(w: number) {
    return html`<svg width=${w} height="1"></svg>`;
  }

  render() {
    const left = ["hand", "zoomtool", "select", "move", "editnodes"];
    const add = ["addmap", "addpic", "addlabel", "addlegend", "addscale", "addshape", "addnodes", "addarrow", "addtable"];
    return html`
      <div class="title">
        <qg-icon name="logo"></qg-icon><span class="name">Composer 1</span>
        <svg width="206" height="26" viewBox="0 0 206 26"><path d="M0 13h20M92 4h18v18H92z" fill="none" stroke="#000" stroke-width="2" /><path d="M184 3l19 19M203 3l-19 19" stroke="#000" stroke-width="1.800" /></svg>
        ${this.gap(15)}
      </div>
      <div class="menu">${["Composer", "Edit", "View", "Layout", "Atlas", "Settings"].map((m) => html`<span>${m}</span>`)}</div>
      <div class="tools">
        <div class="grip"></div>${this.gap(10)}${this.set(["save"])}${this.gap(12)}<div class="sep"></div>${this.gap(14)}
        ${this.set(["newdoc", "dup", "wrench", "folder", "saveas"])}${this.gap(12)}<div class="sep"></div>${this.gap(14)}
        ${this.set(["print", "expimg", "expsvg", "exppdf", "undo", "redo"])}${this.gap(28)}<div class="grip"></div>${this.gap(10)}
        ${this.set(["zoomfull", "zoom11", "zoomin", "zoomout", "refresh"])}${this.gap(28)}<div class="grip"></div>${this.gap(10)}
        ${this.set(["group", "ungroup", "lock", "unlock", "raise", "align"])}${this.gap(28)}<div class="grip"></div>${this.gap(10)}
        ${this.set(["atlas", "first", "prev"])}
        <div class="combo page"><span class="val">1</span><span class="drop">${this.tri(false, 14, "#777")}</span></div>
        ${this.set(["next", "last"])}${this.gap(69)}
        <svg width="20" height="16" viewBox="0 0 20 16"><path d="M3 3l5 5-5 5M11 3l5 5-5 5" fill="none" stroke="#000" stroke-width="2.800" /></svg>
      </div>
      <div class="main">
        <div class="side">
          <div class="hgrip"></div>
          ${left.map((n) => html`<div class="cell ${n === "move" ? "on" : ""}"><qg-icon name=${n}></qg-icon></div>`)}
          <div class="hsep"></div>
          ${add.map((n) => html`<div class="cell"><qg-icon name=${n}></qg-icon></div>`)}
          <svg width="14" height="54" viewBox="0 0 14 54"><path d="M2 39l5 5 5-5M2 47l5 5 5-5" fill="none" stroke="#000" stroke-width="2.800" /></svg>
        </div>
        <div class="frame"><qg-canvas></qg-canvas></div>
        <div class="rail"><i></i></div>
        <div class="dock">
          <div class="tabs"><div class="tab on" style="width:102px">Items</div><div class="tab" style="width:214px">Command history</div><div class="fill"></div></div>
          <div class="dtitle"><div class="hgrip"></div><span class="cap">Items</span><div class="hgrip"></div>${this.closeBtn()}</div>
          <div class="tree">
            <div class="thead"><div><qg-icon name="eye"></qg-icon></div><div><qg-icon name="lock"></qg-icon></div><div class="nm">Item</div></div>
            <div class="trow">${this.check(true)}${this.check(false)}<span>Map 0</span></div>
          </div>
          <div class="split"><i></i></div>
          <div class="tabs low"><div class="tab" style="width:164px">Composition</div><div class="tab on" style="width:196px">Item properties</div><div class="tab" style="width:205px">Atlas generation</div><div class="fill"></div></div>
          <div class="dtitle low"><div class="hgrip"></div><span class="cap w">Item properties</span><div class="hgrip"></div>${this.closeBtn()}</div>
          <div class="head">Map 0</div>
          <div class="scroll">
            <div class="form">
              <div class="grp g1">
                <div class="row"><span class="lab">Scale</span><div class="inp cut">55813</div><qg-override></qg-override></div>
                <div class="row r2"><span class="lab">Map rotation</span><div class="inp spin">0.00 º<div class="spins"><div>${this.tri(true)}</div><div>${this.tri()}</div></div></div><qg-override></qg-override></div>
                <div class="row r3">${this.check(true)}<span class="txt">Draw map canvas items</span></div>
              </div>
              <div class="grp g2">
                <div class="gt">${this.tri(false, 21, "#333")}Layers</div>
                <div class="row">${this.check(false)}<span class="txt">Follow visibility preset</span><div class="combo preset"><span class="val">(none)</span><span class="drop">${this.tri()}</span></div><qg-override></qg-override></div>
                <div class="row rl">${this.check(true)}<span class="txt">Lock layers</span><div class="eyebtn"><qg-icon name="eye"></qg-icon><svg width="10" height="6" viewBox="0 0 10 6"><path d="M0 0h10L5 6z" /></svg></div><qg-override></qg-override></div>
                <div class="row rs">${this.check(true)}<span class="txt">Lock styles for layers</span></div>
              </div>
              <div class="grp g3">
                <div class="gt">${this.tri(false, 21, "#333")}Extents</div>
                <div class="row"><span class="lab">X min</span><div class="inp">-74.025</div><qg-override></qg-override></div>
                <div class="row ry"><span class="lab">Y min</span><div class="inp">40.710</div><qg-override></qg-override></div>
              </div>
            </div>
            <div class="bar"><div class="btn">${this.tri(true)}</div><div class="thumb"><i></i></div><div class="btn">${this.tri(true)}</div><div class="btn">${this.tri()}</div></div>
          </div>
        </div>
      </div>
      <div class="status">
        <span class="sx">x: 251.554 mm</span><span class="sy">y: 224.836 mm</span><span class="sp">page: 1</span>
        <div class="combo zoom"><span class="val">26.5%</span><span class="drop">${this.tri()}</span></div><span>1 item selected</span>
      </div>
      <svg class="over" viewBox="0 0 2300 1273">
        <text class="note" font-size="50" transform="translate(161 405) rotate(-3) scale(.66 1.200)">M</text>
        <text class="note" font-size="46" transform="translate(196 398) rotate(-13) scale(.86 1)" x="0 29 55">ove</text>
        <text class="note" font-size="46" transform="translate(306 382) rotate(-3) scale(.95 1)" x="0 20 53">con</text>
        <text class="note" font-size="68" transform="translate(388 383) rotate(-5) scale(.78 .95)">t</text>
        <text class="note" font-size="46" transform="translate(408 375) rotate(-3) scale(.92 1)" x="0 25">en</text>
        <text class="note" font-size="68" transform="translate(457 375) rotate(-5) scale(.85 .95)">t</text>
        <g transform="translate(80 300) scale(.33333)"><path class="ink" stroke-width="4.500" d="M224 292L210 292 180 320 155 343 125 358 75 405 45 435M36 374L26 444 70 452 52 405 36 374M26 444L46 435"/></g>
        <g transform="translate(1380 820) scale(.5869 .33333)">
          <path class="ink" stroke-width="4" d="M38 546L60 535 90 530 120 536 160 528M134 470L155 500 176 518 160 535 137 574 134 490"/>
          <path class="ink" stroke-width="4" d="M166 375L172 400 180 520 187 600 188 690 195 732M645 335L655 400 665 480 675 550 688 610 690 660 684 690M694 703L680 697"/>
          <path class="ink" stroke-width="4.500" d="M166 370L172 362 210 370 230 366 270 374 310 376 360 384 400 370 440 366 490 353 550 356 600 342 640 330 645 335M195 732L265 726 310 740 375 746 460 741 510 725 595 712 635 714 688 700"/>
        </g>
        <path d="M2275 1273L2298 1248M2283 1273L2298 1257M2291 1273L2298 1265" stroke="#999" stroke-width="2" />
      </svg>
    `;
  }
}
